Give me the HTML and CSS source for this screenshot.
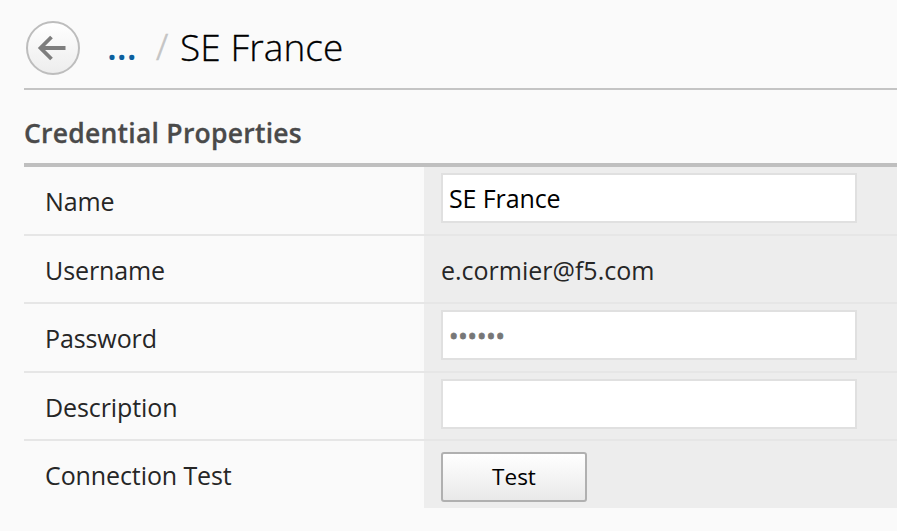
FILE: index.html
```html
<!DOCTYPE html>
<html lang="en">
<head>
<meta charset="utf-8">
<title>SE France</title>
<link rel="stylesheet" href="styles.css">
</head>
<body>
<header class="topbar">
  <button class="back" aria-label="Back">
    <svg width="54" height="54" viewBox="0 0 54 54"><path d="M39.5 27H15M25.5 16L14.5 27L25.5 38" fill="none" stroke="#7d7d7d" stroke-width="3.8"/></svg>
  </button>
  <a class="crumb">...</a><span class="slash">/</span><h1 class="title">SE France</h1>
</header>
<main class="panel">
  <h2 class="heading">Credential Properties</h2>
  <div class="row"><div class="label">Name</div><div class="value"><input class="field" type="text" value="SE France"></div></div>
  <div class="row"><div class="label">Username</div><div class="value"><span class="email">e.cormier@f5.com</span></div></div>
  <div class="row"><div class="label">Password</div><div class="value"><div class="field dots">••••••</div></div></div>
  <div class="row"><div class="label">Description</div><div class="value"><input class="field" type="text"></div></div>
  <div class="row"><div class="label">Connection Test</div><div class="value action"><button class="test">Test</button></div></div>
</main>
</body>
</html>
```
FILE: styles.css
```css
* { box-sizing: border-box; }
body {
  margin: 0;
  height: 531px;
  overflow: hidden;
  padding-left: 24px;
  background: #fafafa;
  color: #262626;
  font: 25px/34px "Open Sans", sans-serif;
}
.topbar {
  height: 90px;
  padding: 21px 0 0 2px;
  border-bottom: 2px solid #c4c4c4;
  display: flex;
  align-items: flex-start;
}
.back {
  width: 54px;
  height: 54px;
  padding: 0;
  border: 2px solid #bdbdbd;
  border-radius: 50%;
  background: linear-gradient(#fff, #ededed);
  flex: none;
}
.back svg { display: block; margin: -2px; }
.crumb { margin: 2px 0 0 27px; width: 49px; color: #0c5f9e; font-size: 36px; font-weight: 600; line-height: 48px; }
.slash { width: 24px; color: #c4c4c4; font-size: 36px; font-weight: 300; line-height: 52px; -webkit-text-stroke: 0.6px #c4c4c4; }
.title { margin: 0; color: #000; font-size: 37px; font-weight: 300; line-height: 51px; letter-spacing: 0.1px; white-space: nowrap; -webkit-text-stroke: 0.3px #000; }
.heading {
  margin: 0;
  height: 77px;
  padding-top: 26px;
  border-bottom: 4px solid #bfbfbf;
  color: #4a4a4a;
  font-size: 26.5px;
  font-weight: 600;
  letter-spacing: 0.25px;
  -webkit-text-stroke: 0.3px #4a4a4a;
}
.row { display: flex; height: 68.6px; border-bottom: 2px solid #e6e6e6; }
.row:last-child { height: 66.6px; border-bottom: 0; }
.label { width: 400px; padding: 17px 0 0 21px; flex: none; letter-spacing: -0.1px; }
.value { flex: 1; padding: 6px 0 0 17px; background: #ededed; }
.field {
  display: block;
  width: 416px;
  height: 50px;
  padding: 0 6px 1px;
  border: 2px solid #e0e0e0;
  border-radius: 0;
  background: #fff;
  color: #000;
  font: 25px/34px "Open Sans", sans-serif;
  letter-spacing: -0.1px;
}
.dots { color: #777; line-height: 47px; -webkit-text-stroke: 0.8px #777; }
.email { display: block; padding-top: 11px; }
.action { padding-top: 11px; }
.test {
  width: 146px;
  height: 50px;
  border: 2px solid #b0b0b0;
  border-radius: 3px;
  background: linear-gradient(#fff, #e9e9e9);
  color: #000;
  font: 22.5px/34px "Open Sans", sans-serif;
}
```
